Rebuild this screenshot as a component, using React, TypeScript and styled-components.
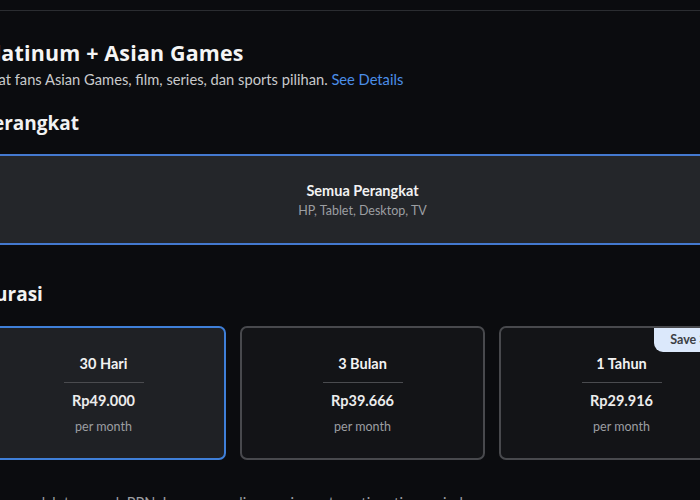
import React from 'react';
import styled, { createGlobalStyle } from 'styled-components';

const GlobalStyle = createGlobalStyle`
  html, body {
    margin: 0;
    padding: 0;
    background: #0b0c0f;
    overflow: hidden;
  }
  body {
    font-family: Lato, 'Open Sans', sans-serif;
    color: #f2f2f2;
  }
`;

const Page = styled.div`
  width: 700px;
  height: 500px;
  overflow: hidden;
  background: #0b0c0f;
`;

const TopRule = styled.div`
  margin-top: 10px;
  height: 1px;
  background: #2b2d31;
`;

const Content = styled.div`
  margin-left: -19px;
  width: 763px;
  padding-top: 28px;
`;

const Title = styled.h1`
  margin: 0;
  font-family: 'Open Sans', sans-serif;
  font-size: 21.4px;
  line-height: 28px;
  font-weight: 700;
  letter-spacing: 0.2px;
  color: #f5f5f5;
`;

const Subtitle = styled.p`
  margin: 2px 0 0;
  font-size: 14.7px;
  line-height: 20px;
  color: #c9cacc;
`;

const Link = styled.a`
  color: #4b8fe8;
  text-decoration: none;
`;

const SectionTitle = styled.h2<{ $top: number }>`
  margin: ${({ $top }) => $top}px 0 0;
  font-family: 'Open Sans', sans-serif;
  font-size: 19px;
  line-height: 26px;
  font-weight: 700;
  color: #f2f2f2;
`;

const DeviceCard = styled.div`
  margin-top: 18px;
  height: 91px;
  box-sizing: border-box;
  border: 2px solid #4479cf;
  border-radius: 6px;
  background: #24262a;
  display: flex;
  flex-direction: column;
  align-items: center;
  justify-content: center;
`;

const DeviceName = styled.div`
  font-size: 14.5px;
  line-height: 19px;
  font-weight: 700;
  color: #f2f2f2;
`;

const DeviceList = styled.div`
  margin-top: 2px;
  font-size: 12.5px;
  line-height: 17px;
  color: #9c9ea2;
`;

const DurationRow = styled.div`
  margin-top: 19px;
  display: grid;
  grid-template-columns: repeat(3, 1fr);
  gap: 14px;
`;

const DurationCard = styled.div<{ $selected?: boolean }>`
  position: relative;
  height: 134px;
  box-sizing: border-box;
  border: 2px solid ${({ $selected }) => ($selected ? '#3f7fd8' : '#48494d')};
  border-radius: 7px;
  background: ${({ $selected }) => ($selected ? '#1f2125' : '#131417')};
  display: flex;
  flex-direction: column;
  align-items: center;
  padding-top: 26px;
  overflow: hidden;
`;

const Period = styled.div`
  font-size: 14.5px;
  line-height: 20px;
  font-weight: 700;
  color: #f2f2f2;
`;

const Divider = styled.div`
  margin-top: 8px;
  width: 80px;
  height: 1px;
  background: #4a4b4f;
`;

const Price = styled.div`
  margin-top: 8px;
  font-size: 14.5px;
  line-height: 20px;
  font-weight: 700;
  color: #ececec;
`;

const PerMonth = styled.div`
  margin-top: 7px;
  font-size: 12.5px;
  line-height: 17px;
  color: #9c9ea2;
`;

const SaveBadge = styled.div`
  position: absolute;
  top: 0;
  right: 0;
  padding: 3px 18px 4px 16px;
  background: #dbe8fb;
  border-bottom-left-radius: 9px;
  font-size: 12.5px;
  line-height: 17px;
  font-weight: 700;
  color: #3c3e44;
`;

const FooterText = styled.p`
  margin: 33px 0 0;
  font-size: 14.5px;
  line-height: 20px;
  color: #9c9ea2;
`;

const durations = [
  { period: '30 Hari', price: 'Rp49.000', selected: true },
  { period: '3 Bulan', price: 'Rp39.666' },
  { period: '1 Tahun', price: 'Rp29.916', save: 'Save 39%' },
];

const App: React.FC = () => {
  return (
    <Page>
      <GlobalStyle />
      <TopRule />
      <Content>
        <Title>Platinum + Asian Games</Title>
        <Subtitle>
          Buat fans Asian Games, film, series, dan sports pilihan. <Link href="#">See Details</Link>
        </Subtitle>

        <SectionTitle $top={21}>Perangkat</SectionTitle>
        <DeviceCard>
          <DeviceName>Semua Perangkat</DeviceName>
          <DeviceList>HP, Tablet, Desktop, TV</DeviceList>
        </DeviceCard>

        <SectionTitle $top={36}>Durasi</SectionTitle>
        <DurationRow>
          {durations.map((d) => (
            <DurationCard key={d.period} $selected={d.selected}>
              {d.save && <SaveBadge>{d.save}</SaveBadge>}
              <Period>{d.period}</Period>
              <Divider />
              <Price>{d.price}</Price>
              <PerMonth>per month</PerMonth>
            </DurationCard>
          ))}
        </DurationRow>

        <FooterText>Harga sudah termasuk PPN. Langganan diperpanjang otomatis setiap periode.</FooterText>
      </Content>
    </Page>
  );
};

export default App;
